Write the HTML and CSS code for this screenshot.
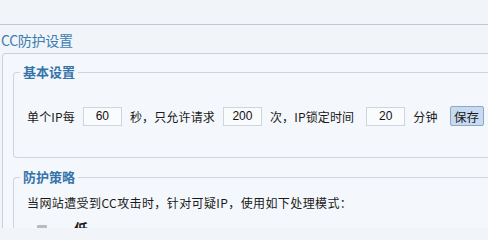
FILE: index.html
```html
<!DOCTYPE html>
<html lang="zh-CN">
<head>
<meta charset="utf-8">
<title>CC防护设置</title>
<link rel="stylesheet" href="styles.css">
</head>
<body>
<div class="topbar"></div>
<div class="title">CC防护设置</div>
<div class="panel">
  <fieldset class="group basic">
    <legend>基本设置</legend>
    <div class="row">
      <span>单个IP每</span>
      <input class="num" type="text" value="60">
      <span>秒，只允许请求</span>
      <input class="num" type="text" value="200">
      <span class="lock">次，IP锁定时间</span>
      <input class="num" type="text" value="20">
      <span>分钟</span>
      <button class="save" type="button">保存</button>
    </div>
  </fieldset>
  <fieldset class="group policy">
    <legend>防护策略</legend>
    <p class="desc">当网站遭受到CC攻击时，针对可疑IP，使用如下处理模式：</p>
    <div class="level">
      <svg class="slider" width="32" height="12" viewBox="0 0 32 12">
        <rect x="1" y="6" width="6" height="1" fill="#c9ccd1"/>
        <rect x="10" y="3" width="10" height="9" rx="1" fill="#b9bcc1"/>
        <rect x="23" y="6" width="7" height="1" fill="#c9ccd1"/>
      </svg>
      <span class="lvl">低</span>
    </div>
  </fieldset>
</div>
</body>
</html>
```
FILE: styles.css
```css
html, body {
  margin: 0;
  padding: 0;
  background: #f1f4f9;
  overflow: hidden;
}
body {
  width: 488px;
  height: 228px;
  font-family: "Noto Sans CJK SC", "Liberation Sans", sans-serif;
  font-size: 12px;
  color: #1a1a1a;
}
.topbar {
  height: 24px;
  border-bottom: 1px solid #c5c9cf;
}
.title {
  height: 28px;
  line-height: 30px;
  font-size: 14px;
  color: #3b7db3;
  padding-left: 1px;
  letter-spacing: -0.3px;
}
.panel {
  box-sizing: border-box;
  margin-left: 2px;
  border-top: 1px solid #ccd1d8;
  border-left: 1px solid #ccd1d8;
  border-top-left-radius: 4px;
  background: #f4f7fb;
  padding: 10px 0 0 10px;
  height: 175px;
  overflow: hidden;
}
.group {
  margin: 0;
  padding: 0 0 0 13px;
  border: 1px solid #d0d5dc;
  border-right: none;
  border-top-left-radius: 4px;
  border-bottom-left-radius: 4px;
}
.group legend {
  margin-left: -7px;
  padding: 0 3px;
  font-size: 13px;
  line-height: 16px;
  font-weight: bold;
  color: #3574aa;
}
.row {
  display: flex;
  align-items: center;
  gap: 8px;
  margin-top: 26px;
  padding-bottom: 31px;
  letter-spacing: 0.15px;
}
.lock {
  margin-right: 4px;
}
.num {
  box-sizing: border-box;
  width: 39px;
  height: 19px;
  border: 1px solid #cfd5dc;
  background: #f9fbfd;
  font-family: "Liberation Sans", sans-serif;
  font-size: 12px;
  text-align: center;
  color: #111;
  padding: 0;
  margin: 0;
}
.save {
  box-sizing: border-box;
  margin-left: 4px;
  width: 34px;
  height: 20px;
  padding: 0;
  border: 1px solid #8ea9c8;
  border-radius: 2px;
  background: #c7daef;
  font-family: "Noto Sans CJK SC", sans-serif;
  font-size: 12.5px;
  color: #1a1a1a;
}
.policy {
  margin-top: 11px;
  height: 60px;
}
.desc {
  margin: 9px 0 0 0;
  line-height: 18px;
  letter-spacing: 0.4px;
}
.level {
  display: flex;
  align-items: flex-start;
  gap: 15px;
  margin-top: 8px;
}
.slider {
  display: block;
  margin-top: 2px;
}
.lvl {
  font-size: 14px;
  font-weight: bold;
  line-height: 16px;
}
```
